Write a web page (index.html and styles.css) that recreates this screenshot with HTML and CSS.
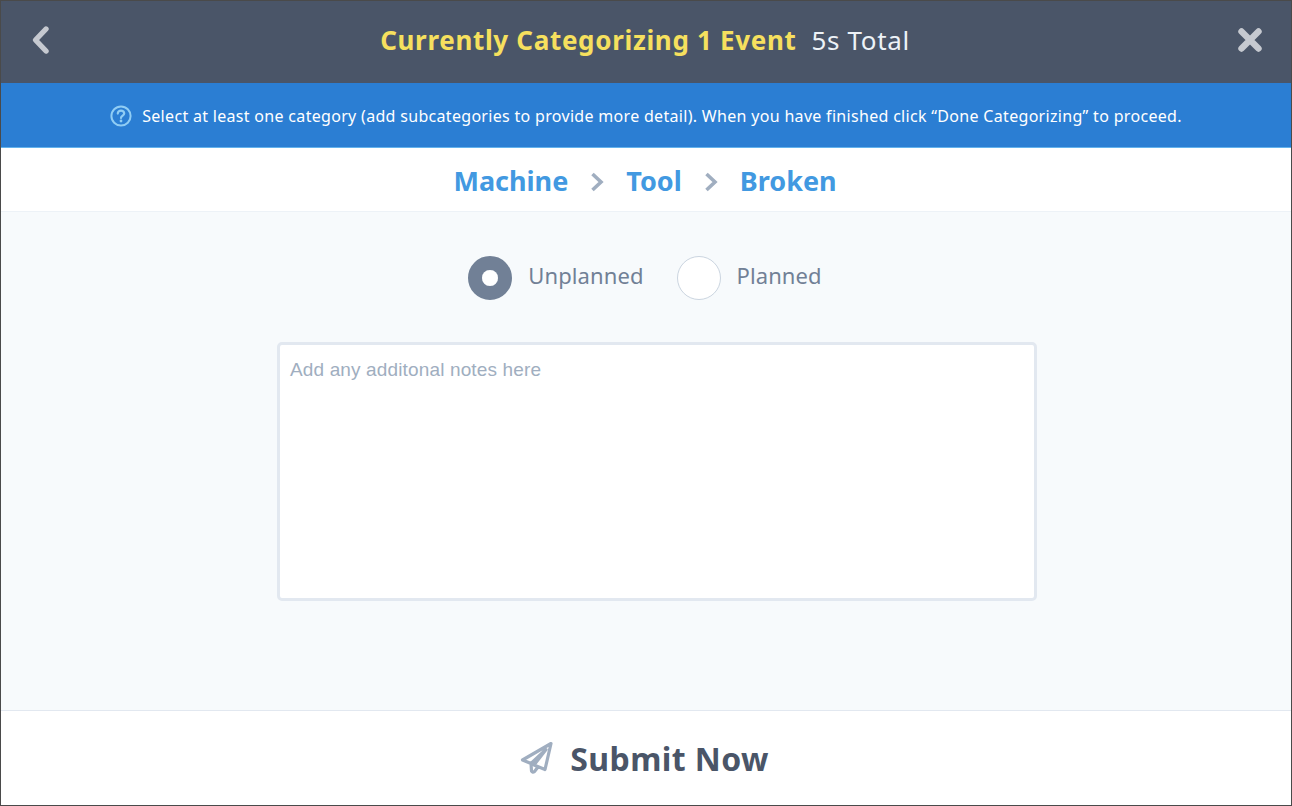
FILE: index.html
```html
<!DOCTYPE html>
<html lang="en">
<head>
    <meta charset="UTF-8">
    <meta name="viewport" content="width=device-width, initial-scale=1.0">
    <title>Categorize Event</title>
    <link rel="stylesheet" href="styles.css">
</head>
<body>
    <div class="frame">
        <header class="topbar">
            <button class="icon-btn" type="button" aria-label="Back">
                <svg width="22" height="30" viewBox="0 0 22 30"><path d="M17 4 L6.5 15 L17 26" fill="none" stroke="#c6c9d0" stroke-width="5.4" stroke-linecap="round" stroke-linejoin="round"/></svg>
            </button>
            <div class="topbar-title">
                <span class="title-main">Currently Categorizing 1 Event</span>
                <span class="title-total">5s Total</span>
            </div>
            <button class="icon-btn" type="button" aria-label="Close">
                <svg width="26" height="26" viewBox="0 0 26 26"><path d="M4.5 4.5 L21.5 21.5 M21.5 4.5 L4.5 21.5" fill="none" stroke="#c6c9d0" stroke-width="6.4" stroke-linecap="round"/></svg>
            </button>
        </header>

        <div class="hint">
            <svg width="22" height="22" viewBox="0 0 22 22">
                <circle cx="11" cy="11" r="9.6" fill="none" stroke="#90cdf4" stroke-width="2"/>
                <path d="M7.8 8.6 C7.8 6.6 9.3 5.6 11 5.6 C12.9 5.6 14.2 6.8 14.2 8.4 C14.2 10.5 11 10.6 11 13" fill="none" stroke="#90cdf4" stroke-width="2.2" stroke-linecap="round"/>
                <circle cx="11" cy="16" r="1.4" fill="#90cdf4"/>
            </svg>
            <span>Select at least one category (add subcategories to provide more detail). When you have finished click “Done Categorizing” to proceed.</span>
        </div>

        <nav class="crumbs">
            <span>Machine</span>
            <svg class="crumb-sep" width="14" height="22" viewBox="0 0 14 22"><path d="M2.5 3 L11 11 L2.5 19" fill="none" stroke="#a0aec0" stroke-width="3.6"/></svg>
            <span>Tool</span>
            <svg class="crumb-sep" width="14" height="22" viewBox="0 0 14 22"><path d="M2.5 3 L11 11 L2.5 19" fill="none" stroke="#a0aec0" stroke-width="3.6"/></svg>
            <span>Broken</span>
        </nav>

        <main class="content">
            <div class="choices">
                <label class="choice">
                    <span class="radio radio-on"></span>
                    <span class="choice-label">Unplanned</span>
                </label>
                <label class="choice">
                    <span class="radio"></span>
                    <span class="choice-label">Planned</span>
                </label>
            </div>
            <textarea class="notes" placeholder="Add any additonal notes here"></textarea>
        </main>

        <footer class="submit">
            <svg width="34" height="34" viewBox="0 0 34 34">
                <path d="M31 2.5 L2.5 19 L11 22.5 L26 8.5 L14 24 L25 28.5 Z M11 22.5 L11.5 30 Q12.5 32 14.5 30.5 L18 26" fill="none" stroke="#a0aec0" stroke-width="3.2" stroke-linejoin="round" stroke-linecap="round"/>
            </svg>
            <span>Submit Now</span>
        </footer>
    </div>
</body>
</html>
```

FILE: styles.css
```css
* {
    box-sizing: border-box;
}
body {
    margin: 0;
    font-family: "Noto Sans", Arial, sans-serif;
}
.frame {
    width: 1292px;
    height: 806px;
    border: 1px solid #4a4a4a;
    display: flex;
    flex-direction: column;
    background-color: #FFFFFF;
}
.topbar {
    height: 82px;
    background-color: #4a5568;
    display: flex;
    align-items: center;
    justify-content: space-between;
    padding: 0 28px 5px 26px;
}
.icon-btn {
    width: 26px;
    height: 30px;
    padding: 0;
    background: none;
    border: none;
    display: flex;
    align-items: center;
    justify-content: center;
}
.topbar-title {
    display: flex;
    align-items: baseline;
    gap: 15px;
    font-size: 26px;
}
.title-main {
    color: #f6e05e;
    font-weight: 700;
    letter-spacing: 0.68px;
}
.title-total {
    color: #edf2f7;
    letter-spacing: 0.65px;
}
.hint {
    height: 65px;
    padding-top: 2px;
    background-color: #2b7ed3;
    border-bottom: 1px solid #63b3ed;
    color: #FFFFFF;
    font-size: 16px;
    letter-spacing: 0.31px;
    display: flex;
    align-items: center;
    justify-content: center;
    gap: 10px;
}
.crumbs {
    height: 64px;
    padding: 2px 2px 0 0;
    border-bottom: 1px solid #edf2f7;
    display: flex;
    align-items: center;
    justify-content: center;
    gap: 22px;
    color: #4299e1;
    font-size: 27px;
    font-weight: 700;
}
.crumb-sep {
    margin-top: 2px;
}
.content {
    flex: 1;
    background-color: #f7fafc;
    border-bottom: 1px solid #e2e8f0;
    display: flex;
    flex-direction: column;
    align-items: center;
    padding-top: 44px;
}
.choices {
    display: flex;
    gap: 33px;
    margin-right: 2px;
}
.choice {
    display: flex;
    align-items: center;
    gap: 16px;
    color: #718096;
    font-size: 22px;
    letter-spacing: 0.1px;
}
.choice-label {
    padding-bottom: 6px;
}
.radio {
    width: 44px;
    height: 44px;
    border-radius: 50%;
    background-color: #FFFFFF;
    border: 1px solid #cbd5e0;
}
.radio-on {
    background-color: #718096;
    border: 14px solid #718096;
    background-clip: padding-box;
    position: relative;
}
.radio-on::after {
    content: "";
    position: absolute;
    inset: 0;
    border-radius: 50%;
    background-color: #FFFFFF;
}
.notes {
    width: 760px;
    height: 259px;
    margin-top: 42px;
    margin-left: 22px;
    padding: 14px 10px;
    background-color: #FFFFFF;
    border: 3px solid #e2e8f0;
    border-radius: 5px;
    font-family: "Liberation Sans", Arial, sans-serif;
    font-size: 19px;
    letter-spacing: 0.14px;
    resize: none;
    outline: none;
}
.notes::placeholder {
    color: #a0aec0;
    opacity: 1;
}
.submit {
    height: 94px;
    padding: 0 3px 0 0;
    display: flex;
    align-items: center;
    justify-content: center;
    gap: 16px;
    color: #4a5568;
    font-size: 32px;
    letter-spacing: 0.4px;
    font-weight: 700;
}
```
